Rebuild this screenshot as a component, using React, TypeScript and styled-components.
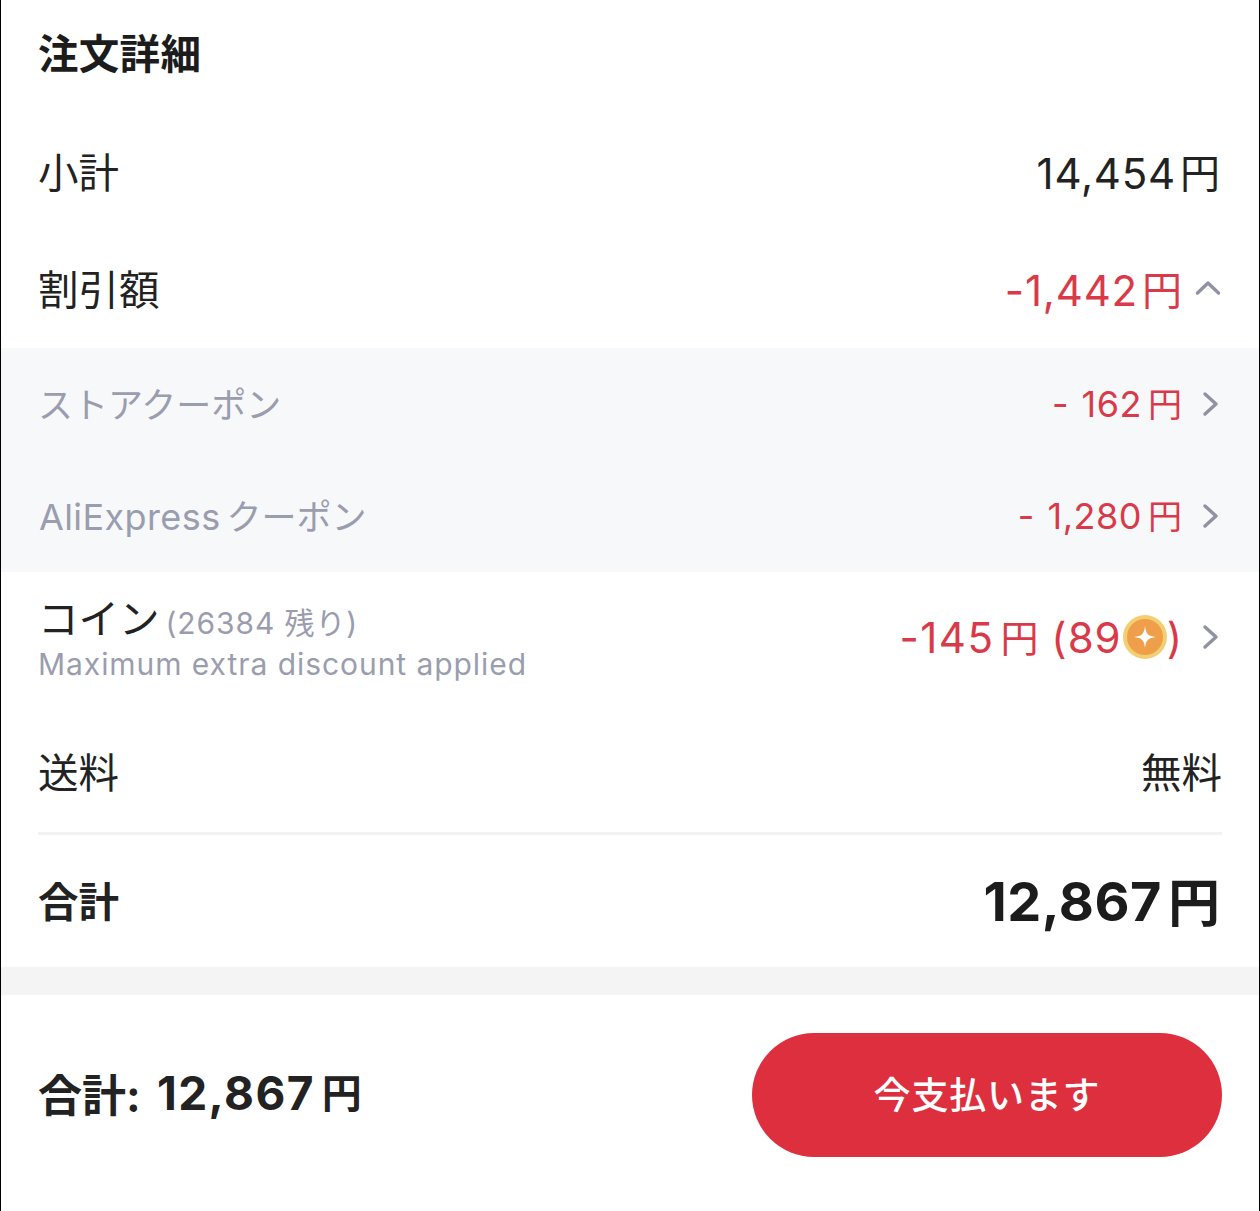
import styled, { createGlobalStyle } from "styled-components";

const JP = `"Inter", "Noto Sans CJK JP", sans-serif`;
const RED = "#d93a4a";

const GlobalStyle = createGlobalStyle`
  html, body { margin: 0; padding: 0; background: #fff; }
  * { box-sizing: border-box; }
`;

const Page = styled.div`
  width: 1260px;
  height: 1211px;
  overflow: hidden;
  border-left: 1px solid #000;
  border-right: 1px solid #000;
  font-family: ${JP};
  color: #1f1f1f;
`;

const Details = styled.section`
  height: 967px;
  display: flex;
  flex-direction: column;
  padding-top: 28px;
`;

const Heading = styled.h2`
  margin: 0 0 32px;
  padding: 0 37px;
  height: 54px;
  line-height: 54px;
  font-size: 40.5px;
  letter-spacing: 0.3px;
  font-weight: 700;
  color: #1c1c1c;
`;

const Row = styled.div<{ $h: number; $top?: number }>`
  height: ${(p) => p.$h}px;
  padding: ${(p) => p.$top || 0}px 37px 0;
  display: flex;
  align-items: center;
  justify-content: space-between;
  flex-shrink: 0;
`;

const Label = styled.span<{ $bold?: boolean }>`
  padding-bottom: 5px;
  font-size: 40.5px;
  font-weight: ${(p) => (p.$bold ? 700 : 400)};
  color: #222;
`;

const Amount = styled.span<{ $red?: boolean }>`
  display: inline-flex;
  align-items: center;
  margin-right: ${(p) => (p.$red ? 0 : 2)}px;
  font-size: 42px;
  letter-spacing: 0.8px;
  color: ${(p) => (p.$red ? RED : "#222")};
`;

const Yen = styled.span<{ $size: number; $gap: number }>`
  padding-bottom: 4px;
  font-size: ${(p) => p.$size}px;
  margin-left: ${(p) => p.$gap}px;
  letter-spacing: 0;
`;

const Band = styled.div`
  margin-left: -1px;
  background: #f7f8fa;
`;

const BandRow = styled.div`
  height: 112px;
  padding: 0 37px 0 38px;
  display: flex;
  align-items: center;
  justify-content: space-between;
`;

const BandLabel = styled.span`
  padding-bottom: 4px;
  font-size: 35px;
  color: #9a9dae;
`;

const Latin = styled.span`
  font-size: 36px;
  letter-spacing: 0.4px;
  margin-left: 1px;
  margin-right: 6px;
`;

const BandAmount = styled.span`
  display: inline-flex;
  align-items: center;
  font-size: 36px;
  letter-spacing: 0.5px;
  word-spacing: 2px;
  white-space: pre;
  color: ${RED};
`;

const End = styled.div`
  display: flex;
  align-items: center;
`;

const Chevron = styled.svg<{ $gap: number; $right: number }>`
  width: 28px;
  height: 28px;
  margin-left: ${(p) => p.$gap}px;
  margin-right: ${(p) => p.$right}px;
  fill: none;
  stroke: #8f92a3;
  stroke-width: 3.4;
  stroke-linecap: round;
  stroke-linejoin: round;
`;

const CoinText = styled.div`
  display: flex;
  flex-direction: column;
  padding-bottom: 3px;
`;

const CoinTop = styled.div`
  display: flex;
  align-items: baseline;
  height: 57px;
`;

const CoinLabel = styled.span`
  font-size: 40.5px;
  color: #222;
`;

const CoinLeft = styled.span`
  margin-left: 6px;
  font-size: 30px;
  letter-spacing: 0.9px;
  color: #9a9dae;
`;

const CoinNote = styled.div`
  font-size: 30px;
  line-height: 40px;
  letter-spacing: 0.94px;
  color: #9a9dae;
`;

const CoinAmount = styled.span`
  display: inline-flex;
  align-items: center;
  font-size: 42px;
  white-space: pre;
  color: ${RED};
`;

const CoinDigits = styled.span`
  letter-spacing: 1.5px;
`;

const CoinCount = styled.span`
  letter-spacing: 1px;
`;

const CoinIcon = styled.svg`
  width: 46px;
  height: 46px;
  margin-right: -1px;
`;

const Divider = styled.div`
  height: 3px;
  margin: 0 37px;
  background: #f1f2f4;
  flex-shrink: 0;
`;

const TotalAmount = styled.span`
  display: inline-flex;
  align-items: center;
  margin-right: 2px;
  font-size: 54px;
  letter-spacing: 0.5px;
  font-weight: 700;
  color: #1c1c1c;
`;

const Gap = styled.div`
  height: 28px;
  margin-left: -1px;
  background: #f4f4f4;
`;

const Footer = styled.footer`
  height: 216px;
  padding: 38px 37px 0;
  display: flex;
  align-items: flex-start;
  justify-content: space-between;
`;

const FooterTotal = styled.div`
  height: 120px;
  display: flex;
  align-items: center;
  white-space: pre;
  font-size: 44px;
  font-weight: 700;
  color: #222;
`;

const FooterDigits = styled.span`
  font-size: 46px;
  letter-spacing: 1.4px;
  margin-left: 4px;
`;

const PayButton = styled.button`
  width: 470px;
  height: 124px;
  padding: 0 0 4px;
  border: none;
  border-radius: 62px;
  background: #de2f3e;
  color: #fff;
  font-family: ${JP};
  font-size: 37px;
  font-weight: 500;
  letter-spacing: 0.8px;
`;

const ChevronRight = ({ gap = 14 }: { gap?: number }) => (
  <Chevron $gap={gap} $right={-2} viewBox="0 0 28 28">
    <path d="M9 4 L20 14 L9 24" />
  </Chevron>
);

const ChevronUp = () => (
  <Chevron $gap={12} $right={0} viewBox="0 0 28 28">
    <path d="M3.5 17 L14 7 L24.5 17" />
  </Chevron>
);

export default function App() {
  return (
    <Page>
      <GlobalStyle />
      <Details>
        <Heading>注文詳細</Heading>
        <Row $h={118}>
          <Label>小計</Label>
          <Amount>
            14,454<Yen $size={40} $gap={4}>円</Yen>
          </Amount>
        </Row>
        <Row $h={116}>
          <Label>割引額</Label>
          <End>
            <Amount $red>
              -1,442<Yen $size={40} $gap={4}>円</Yen>
            </Amount>
            <ChevronUp />
          </End>
        </Row>
        <Band>
          <BandRow>
            <BandLabel>ストアクーポン</BandLabel>
            <End>
              <BandAmount>
                - 162<Yen $size={34} $gap={6}>円</Yen>
              </BandAmount>
              <ChevronRight />
            </End>
          </BandRow>
          <BandRow>
            <BandLabel>
              <Latin>AliExpress</Latin>クーポン
            </BandLabel>
            <End>
              <BandAmount>
                - 1,280<Yen $size={34} $gap={6}>円</Yen>
              </BandAmount>
              <ChevronRight />
            </End>
          </BandRow>
        </Band>
        <Row $h={130}>
          <CoinText>
            <CoinTop>
              <CoinLabel>コイン</CoinLabel>
              <CoinLeft>(26384 残り)</CoinLeft>
            </CoinTop>
            <CoinNote>Maximum extra discount applied</CoinNote>
          </CoinText>
          <End>
            <CoinAmount>
              <CoinDigits>-145</CoinDigits>
              <Yen $size={38} $gap={6}>円</Yen>
              <CoinCount>{" (89"}</CoinCount>
              <CoinIcon viewBox="0 0 46 46">
                <circle cx="23" cy="23" r="22" fill="#f3cf73" />
                <circle cx="23" cy="23" r="18" fill="#ef9e4a" />
                <path d="M23 12 C24 20 26 22 34 23 C26 24 24 26 23 34 C22 26 20 24 12 23 C20 22 22 20 23 12 Z" fill="#fff" />
              </CoinIcon>
              )
            </CoinAmount>
            <ChevronRight gap={14} />
          </End>
        </Row>
        <Row $h={130} $top={12}>
          <Label>送料</Label>
          <Label>無料</Label>
        </Row>
        <Divider />
        <Row $h={133}>
          <Label $bold>合計</Label>
          <TotalAmount>
            12,867<Yen $size={52} $gap={6}>円</Yen>
          </TotalAmount>
        </Row>
      </Details>
      <Gap />
      <Footer>
        <FooterTotal>
          合計:
          <FooterDigits> 12,867</FooterDigits>
          <Yen $size={40} $gap={7}>円</Yen>
        </FooterTotal>
        <PayButton>今支払います</PayButton>
      </Footer>
    </Page>
  );
}
